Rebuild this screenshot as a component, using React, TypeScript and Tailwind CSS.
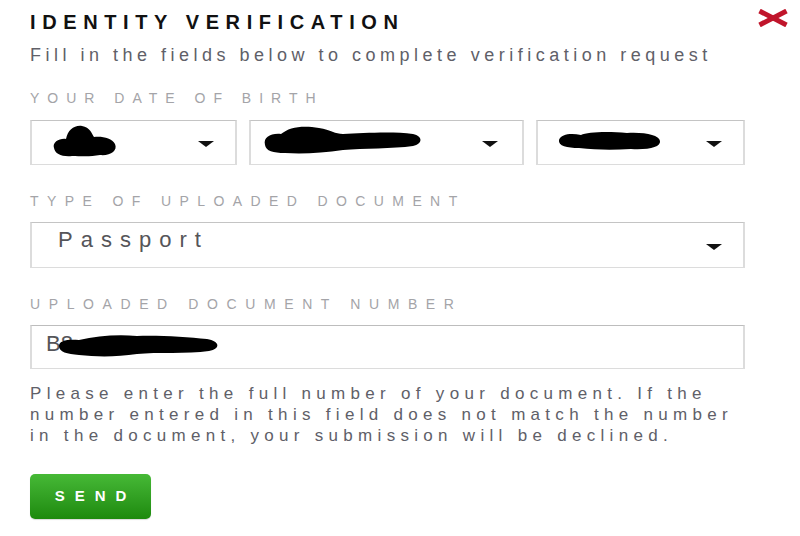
import React from "react";

const font = { fontFamily: '"Liberation Sans", Arial, sans-serif' };

function Arrow() {
  return (
    <svg width="16" height="6" viewBox="0 0 16 6" className="mt-[3px] shrink-0">
      <polygon points="0,0 16,0 8,6" fill="#111" />
    </svg>
  );
}

function Blob({ w, h, d }: { w: number; h: number; d: string }) {
  return (
    <svg width={w} height={h} viewBox={`0 0 ${w} ${h}`} className="shrink-0">
      <path d={d} fill="#000" />
    </svg>
  );
}

export default function App() {
  return (
    <div className="min-h-[536px] w-[800px] bg-white pl-[30px] pr-[11px] pt-[10px] text-[#646468]" style={font}>
      <div className="flex items-start justify-between">
        <h1 className="text-[20px] font-bold leading-[24px] tracking-[6.6px] text-[#111111]">
          IDENTITY VERIFICATION
        </h1>
        <svg width="32" height="18" viewBox="0 0 32 18" className="-mt-[1px]">
          <line x1="2.5" y1="2" x2="29.5" y2="16" stroke="#c0152b" strokeWidth="5" />
          <line x1="29.5" y1="2" x2="2.5" y2="16" stroke="#c0152b" strokeWidth="5" />
        </svg>
      </div>

      <div className="w-[715px]">
        <p className="mt-[9px] text-[18px] leading-[24px] tracking-[4.5px] whitespace-nowrap text-[#606068]">
          Fill in the fields below to complete verification request
        </p>

        <div className="mt-[21px] text-[14px] leading-[20px] tracking-[8px] text-[#a4a4a8] whitespace-nowrap">
          YOUR DATE OF BIRTH
        </div>
        <div className="mt-[12px] flex gap-3">
          <div className="flex h-[45px] w-[207px] items-center justify-between border border-x-2 border-[#dcdcdc] border-t-[#c4c4c4] pl-[20px] pr-[21px]">
            <div className="-mt-[4px]">
              <Blob w={66} h={34} d="M2 24 C0 18 8 14 14 15 C16 6 22 1 30 2 C38 3 40 10 42 13 C50 12 60 14 63 20 C66 27 58 32 48 31 C38 33 28 32 20 32 C10 33 3 30 2 24 Z" />
            </div>
            <Arrow />
          </div>
          <div className="flex h-[45px] w-[275px] items-center justify-between border border-x-2 border-[#dcdcdc] border-t-[#c4c4c4] pl-[12px] pr-[24px]">
            <div className="-mt-[6px]">
              <Blob w={160} h={30} d="M2 20 C0 12 8 8 18 9 C26 2 40 0 56 3 C68 5 72 9 80 9 C100 8 130 6 150 9 C160 11 160 19 150 21 C130 24 100 23 80 25 C60 28 40 29 22 28 C10 28 3 26 2 20 Z" />
            </div>
            <Arrow />
          </div>
          <div className="flex h-[45px] w-[209px] items-center justify-between border border-x-2 border-[#dcdcdc] border-t-[#c4c4c4] pl-[19px] pr-[21px]">
            <div className="-mt-[4px]">
              <Blob w={105} h={20} d="M2 9 C4 3 14 2 24 4 C30 1 50 0 70 2 C88 1 102 4 103 10 C104 16 92 19 74 18 C56 19 40 19 22 17 C10 17 1 15 2 9 Z" />
            </div>
            <Arrow />
          </div>
        </div>

        <div className="mt-[26px] text-[14px] leading-[20px] tracking-[8.4px] text-[#a4a4a8] whitespace-nowrap">
          TYPE OF UPLOADED DOCUMENT
        </div>
        <div className="mt-[11px] flex h-[46px] justify-between border border-x-2 border-[#dcdcdc] border-t-[#c4c4c4] pl-[26px] pr-[21px]">
          <span className="mt-[4px] text-[22px] leading-[26px] tracking-[8px] text-[#555559]">Passport</span>
          <div className="flex items-center">
            <Arrow />
          </div>
        </div>

        <div className="mt-[26px] text-[14px] leading-[20px] tracking-[8.6px] text-[#a4a4a8] whitespace-nowrap">
          UPLOADED DOCUMENT NUMBER
        </div>
        <div className="mt-[11px] flex h-[44px] items-start border border-x-2 border-[#dcdcdc] border-t-[#bdbdbd] pl-[14px]">
          <span className="mt-[5px] text-[22px] leading-[26px] text-[#555559]">B8</span>
          <div className="-ml-[16px] mt-[6px]">
            <Blob w={165} h={26} d="M2 14 C2 8 12 7 22 8 C40 4 60 2 80 4 C100 3 130 5 150 7 C163 9 164 17 152 19 C130 22 100 20 80 22 C60 25 40 25 22 23 C10 22 2 20 2 14 Z" />
          </div>
        </div>

        <div className="mt-[14px] text-[17px] leading-[21px] tracking-[5.3px] whitespace-nowrap text-[#606068]">
          <div>Please enter the full number of your document. If the</div>
          <div>number entered in this field does not match the number</div>
          <div>in the document, your submission will be declined.</div>
        </div>

        <button className="mt-[28px] flex h-[45px] w-[121px] items-center justify-center rounded-[5px] bg-gradient-to-b from-[#46b936] to-[#1d8a0c] pl-[10px] text-[15px] font-bold tracking-[10px] text-white shadow-[0_1px_1px_rgba(0,0,0,0.15)]">
          SEND
        </button>
      </div>
    </div>
  );
}
